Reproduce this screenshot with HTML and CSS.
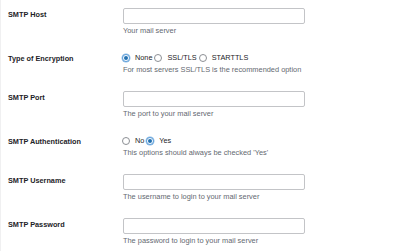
FILE: index.html
```html
<!DOCTYPE html>
<html>
<head>
<meta charset="utf-8">
<link rel="stylesheet" href="styles.css">
</head>
<body>
<div class="form">
  <div class="row">
    <div class="label">SMTP Host</div>
    <div class="field">
      <div class="input"></div>
      <div class="desc">Your mail server</div>
    </div>
  </div>
  <div class="row">
    <div class="label">Type of Encryption</div>
    <div class="field">
      <div class="radios">
        <span class="radio checked"></span><span class="opt">None</span>
        <span class="radio"></span><span class="opt">SSL/TLS</span>
        <span class="radio"></span><span class="opt">STARTTLS</span>
      </div>
      <div class="desc">For most servers SSL/TLS is the recommended option</div>
    </div>
  </div>
  <div class="row">
    <div class="label">SMTP Port</div>
    <div class="field">
      <div class="input"></div>
      <div class="desc">The port to your mail server</div>
    </div>
  </div>
  <div class="row">
    <div class="label">SMTP Authentication</div>
    <div class="field">
      <div class="radios">
        <span class="radio"></span><span class="opt">No</span>
        <span class="radio checked"></span><span class="opt">Yes</span>
      </div>
      <div class="desc">This options should always be checked 'Yes'</div>
    </div>
  </div>
  <div class="row">
    <div class="label">SMTP Username</div>
    <div class="field">
      <div class="input"></div>
      <div class="desc">The username to login to your mail server</div>
    </div>
  </div>
  <div class="row">
    <div class="label">SMTP Password</div>
    <div class="field">
      <div class="input"></div>
      <div class="desc">The password to login to your mail server</div>
    </div>
  </div>
</div>
</body>
</html>
```
FILE: styles.css
```css
html, body {
  margin: 0;
  padding: 0;
  background: #fff;
}
body {
  font-family: "Liberation Sans", Arial, sans-serif;
  color: #1d2327;
  border-left: 1px solid #f0f0f1;
  height: 251px;
  box-sizing: border-box;
  overflow: hidden;
}
.form {
  display: flex;
  flex-direction: column;
  gap: 16px;
  padding: 8px 0 0 7px;
}
.row {
  display: flex;
}
.label {
  width: 115px;
  font-size: 7.3px;
  font-weight: bold;
  line-height: 10px;
  margin-top: 2px;
  color: #1d2327;
}
.field {
  display: flex;
  flex-direction: column;
}
.input {
  width: 180px;
  height: 14px;
  border: 1px solid #c3c4c7;
  border-radius: 2px;
  background: #fff;
}
.desc {
  margin-top: 2px;
  font-size: 7.4px;
  line-height: 10px;
  color: #646970;
  white-space: nowrap;
}
.radios {
  display: flex;
  align-items: center;
  height: 11px;
  font-size: 7.3px;
  margin-left: -1px;
}
.radio {
  width: 6px;
  height: 6px;
  border: 1px solid #8c8f94;
  border-radius: 50%;
  margin-right: 5px;
  position: relative;
  background: #fff;
}
.radio.checked {
  border-color: #5b9dd9;
  box-shadow: 0 0 0 0.5px #8fbde6;
}
.radio.checked::after {
  content: "";
  position: absolute;
  left: 1px;
  top: 1px;
  width: 4px;
  height: 4px;
  border-radius: 50%;
  background: #2271b1;
}
.opt {
  margin-right: 2px;
  color: #1d2327;
}
```
